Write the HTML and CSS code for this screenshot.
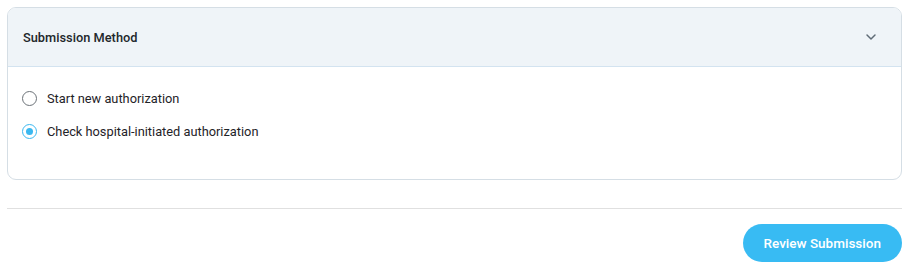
FILE: index.html
```html
<!DOCTYPE html>
<html lang="en">

<head>
    <meta charset="UTF-8">
    <meta name="viewport" content="width=device-width, initial-scale=1.0">
    <title>Submission Method</title>
    <link rel="stylesheet" href="styles.css">
</head>

<body>
    <div class="page">
        <div class="panel">
            <div class="panel-header">
                <h3 class="panel-title">Submission Method</h3>
                <svg class="chevron" width="16" height="16" viewBox="0 0 24 24" fill="none" stroke="#5f6b76" stroke-width="2.2" stroke-linecap="round" stroke-linejoin="round">
                    <polyline points="6 9 12 15 18 9"></polyline>
                </svg>
            </div>
            <div class="panel-body">
                <label class="option">
                    <input type="radio" name="method" value="new">
                    <span class="radio"></span>
                    <span class="option-text">Start new authorization</span>
                </label>
                <label class="option">
                    <input type="radio" name="method" value="hospital" checked>
                    <span class="radio"></span>
                    <span class="option-text">Check hospital-initiated authorization</span>
                </label>
            </div>
        </div>

        <hr class="divider">

        <div class="actions">
            <button class="btn-primary">Review Submission</button>
        </div>
    </div>
</body>

</html>
```

FILE: styles.css
```css
body {
    font-family: Roboto, "Noto Sans", Arial, sans-serif;
    background-color: #ffffff;
    color: #1f2328;
    margin: 0;
    padding: 0;
}

.page {
    padding: 7px 13px 0 7px;
}

.panel {
    border: 1px solid #d5dee5;
    border-radius: 9px;
    overflow: hidden;
}

.panel-header {
    display: flex;
    justify-content: space-between;
    align-items: center;
    height: 58px;
    padding: 0 22px 0 15px;
    background-color: #eff4f8;
    border-bottom: 1px solid #d3e3f0;
}

.panel-title {
    margin: 0;
    font-family: "Roboto Medium", Roboto, Arial, sans-serif;
    font-size: 12.8px;
    font-weight: 500;
    color: #22272b;
}

.chevron {
    display: block;
}

.panel-body {
    padding: 15px 14px 31px;
}

.option {
    display: flex;
    align-items: center;
    height: 33px;
    cursor: pointer;
}

.option input {
    display: none;
}

.radio {
    box-sizing: border-box;
    width: 15px;
    height: 15px;
    border: 1.5px solid #6c7278;
    border-radius: 50%;
    margin-right: 10px;
    position: relative;
}

.option input:checked + .radio {
    border-color: #3bb8f0;
}

.option input:checked + .radio::after {
    content: "";
    position: absolute;
    left: 2.5px;
    top: 2.5px;
    width: 7px;
    height: 7px;
    border-radius: 50%;
    background-color: #3bb8f0;
}

.option-text {
    font-size: 12.8px;
    color: #1f2328;
}

.divider {
    border: none;
    border-top: 1px solid #e0e0e0;
    margin: 28px 0 15px;
}

.actions {
    display: flex;
    justify-content: flex-end;
}

.btn-primary {
    height: 38px;
    padding: 0 21px;
    border: none;
    border-radius: 19px;
    background-color: #38bbf3;
    color: #ffffff;
    font-family: "Roboto Medium", Roboto, Arial, sans-serif;
    font-size: 13.5px;
    font-weight: 500;
    cursor: pointer;
}
```
